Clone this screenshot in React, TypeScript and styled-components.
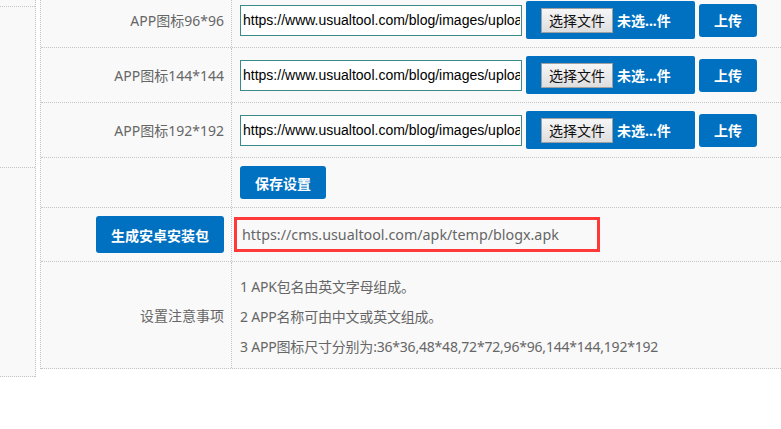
import styled, { createGlobalStyle } from 'styled-components';

const GlobalStyle = createGlobalStyle`
	html, body {
		margin: 0;
		padding: 0;
		background: #fff;
		overflow: hidden;
	}
	body {
		font-family: "Noto Sans", "Noto Sans CJK SC", sans-serif;
		font-size: 14px;
		color: #666;
	}
`;

const blue = '#0070c0';
const dotted = '1px dotted #c4c4c4';

const Page = styled.div`
	display: flex;
	align-items: flex-start;
	gap: 4px;
	margin-top: -7px;
	width: 820px;
`;

const Sidebar = styled.div`
	width: 35px;
	flex-shrink: 0;
	background: #f9f9f9;
	border-right: ${dotted};
	display: flex;
	flex-direction: column;
`;

const SideItem = styled.div<{ $h: number }>`
	height: ${(p) => p.$h}px;
	border-bottom: ${dotted};
`;

const Table = styled.div`
	flex: 1;
	background: #f9f9f9;
	border-left: ${dotted};
	border-right: ${dotted};
`;

const Row = styled.div<{ $h: number }>`
	display: grid;
	grid-template-columns: 191px 1fr;
	min-height: ${(p) => p.$h}px;
	border-bottom: ${dotted};
	box-sizing: border-box;
`;

const Label = styled.div`
	display: flex;
	align-items: center;
	justify-content: flex-end;
	padding-right: 7px;
	border-right: ${dotted};
	color: #666;
	white-space: nowrap;
`;

const Cell = styled.div`
	display: flex;
	align-items: center;
	gap: 4px;
	padding-left: 8px;
`;

const UrlInput = styled.input`
	width: 282px;
	height: 31px;
	box-sizing: border-box;
	border: 1px solid #3a8a8a;
	padding: 0 1px 0 2px;
	font-family: "Liberation Sans", Arial, sans-serif;
	font-size: 14px;
	color: #000;
	background: #fff;
	outline: none;
`;

const FileBox = styled.div`
	display: flex;
	align-items: center;
	gap: 4px;
	width: 169px;
	height: 38px;
	box-sizing: border-box;
	padding-left: 15px;
	background: ${blue};
	border-radius: 2px;
	color: #fff;
	font-weight: bold;
	white-space: nowrap;
`;

const ChooseButton = styled.span`
	display: inline-flex;
	align-items: center;
	justify-content: center;
	width: 72px;
	height: 25px;
	box-sizing: border-box;
	border: 1px solid #a0a0a0;
	background: linear-gradient(#f6f6f6, #dedede);
	color: #111;
	font-weight: normal;
	font-size: 14px;
`;

const BlueButton = styled.button<{ $w: number; $h: number }>`
	width: ${(p) => p.$w}px;
	height: ${(p) => p.$h}px;
	border: none;
	border-radius: 3px;
	background: ${blue};
	color: #fff;
	font-family: "Noto Sans", "Noto Sans CJK SC", sans-serif;
	font-weight: bold;
	font-size: 14px;
	padding: 0;
	cursor: pointer;
`;

const ResultBox = styled.div`
	width: 366px;
	height: 35px;
	box-sizing: border-box;
	margin-left: -6px;
	border: 3px solid #ff3838;
	display: flex;
	align-items: center;
	padding-left: 5px;
	font-size: 14.3px;
	color: #666;
`;

const Notes = styled.div`
	padding: 10px 0 6px 8px;
	line-height: 30px;
	letter-spacing: -0.2px;
	color: #666;
`;

const icons = ['96*96', '144*144', '192*192'];

export default function App() {
	return (
		<>
			<GlobalStyle />
			<Page>
				<Sidebar>
					<SideItem $h={13} />
					<SideItem $h={160} />
					<SideItem $h={208} />
				</Sidebar>
				<Table>
					{icons.map((size) => (
						<Row $h={55} key={size}>
							<Label>APP图标{size}</Label>
							<Cell>
								<UrlInput
									readOnly
									value="https://www.usualtool.com/blog/images/upload/app.png"
								/>
								<FileBox>
									<ChooseButton>选择文件</ChooseButton>
									<span>未选...件</span>
								</FileBox>
								<BlueButton $w={58} $h={33}>上传</BlueButton>
							</Cell>
						</Row>
					))}
					<Row $h={50}>
						<Label />
						<Cell>
							<BlueButton $w={86} $h={33}>保存设置</BlueButton>
						</Cell>
					</Row>
					<Row $h={54}>
						<Label>
							<BlueButton $w={128} $h={37}>生成安卓安装包</BlueButton>
						</Label>
						<Cell>
							<ResultBox>https://cms.usualtool.com/apk/temp/blogx.apk</ResultBox>
						</Cell>
					</Row>
					<Row $h={107}>
						<Label>设置注意事项</Label>
						<Notes>
							<div>1 APK包名由英文字母组成。</div>
							<div>2 APP名称可由中文或英文组成。</div>
							<div>3 APP图标尺寸分别为:36*36,48*48,72*72,96*96,144*144,192*192</div>
						</Notes>
					</Row>
				</Table>
			</Page>
		</>
	);
}
